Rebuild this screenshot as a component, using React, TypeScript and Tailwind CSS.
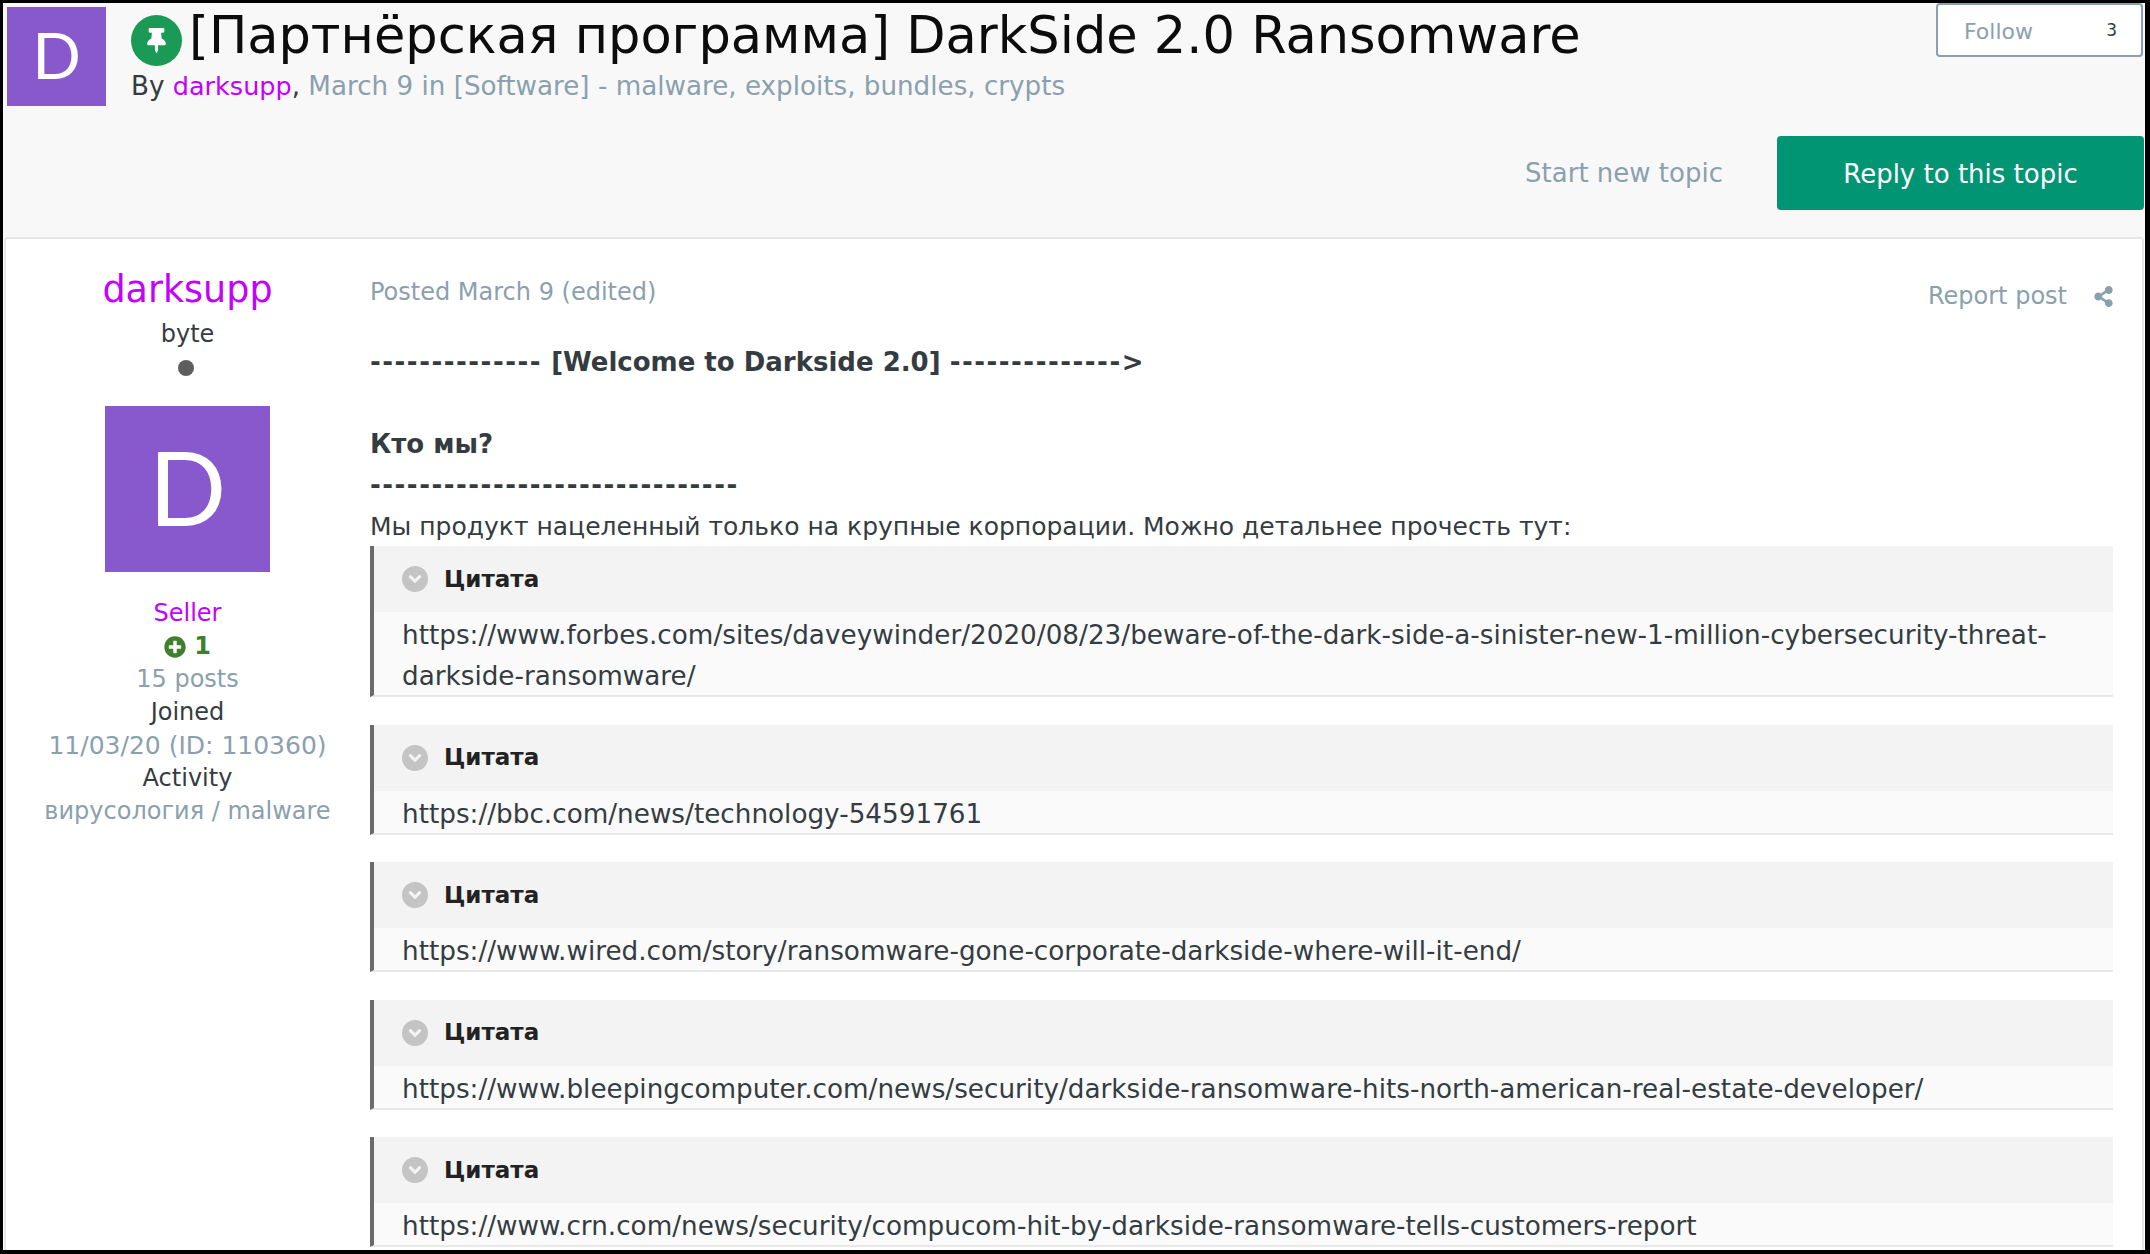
import { FaThumbtack, FaShareAlt, FaPlusCircle, FaAngleDown } from "react-icons/fa";

const quotes = [
  "https://www.forbes.com/sites/daveywinder/2020/08/23/beware-of-the-dark-side-a-sinister-new-1-million-cybersecurity-threat-darkside-ransomware/",
  "https://bbc.com/news/technology-54591761",
  "https://www.wired.com/story/ransomware-gone-corporate-darkside-where-will-it-end/",
  "https://www.bleepingcomputer.com/news/security/darkside-ransomware-hits-north-american-real-estate-developer/",
  "https://www.crn.com/news/security/compucom-hit-by-darkside-ransomware-tells-customers-report",
];

function Quote({ text }: { text: string }) {
  return (
    <div className="mb-[27.5px] border-l-[4px] border-b-2 border-l-[#6a6a6a] border-b-[#e8e8e8] bg-[#fafafa]">
      <div className="flex h-[66px] items-center bg-[#f3f3f3] pl-[28px]">
        <span className="flex h-[26px] w-[26px] items-center justify-center rounded-full bg-[#c4c4c4] text-[20px] text-[#f3f3f3]">
          <FaAngleDown />
        </span>
        <span className="ml-[16px] text-[23px] font-bold text-[#222222]">Цитата</span>
      </div>
      <div className="-mb-[2px] pl-[28px] pr-[29px] pt-[3px] text-[26.25px] leading-[41px] text-[#353c41]">{text}</div>
    </div>
  );
}

export default function App() {
  return (
    <div className="h-[1254px] w-[2150px] overflow-hidden border-[3px] border-r-[5px] border-b-[4px] border-black bg-white font-['DejaVu_Sans',sans-serif] text-[24px] text-[#353c41]">
      <div className="flex h-[234px] flex-col bg-[#f8f8f8]">
        <div className="flex h-[133px]">
          <div className="ml-[4px] mt-[4px] flex h-[99px] w-[99px] items-center justify-center bg-[#8859cd] pb-[4px] font-['Lato',sans-serif] text-[64px] text-white">D</div>
          <div className="ml-[25px] flex-1">
            <div className="flex h-[65px] items-center">
              <span className="mt-[9px] flex h-[51px] w-[51px] shrink-0 items-center justify-center rounded-full bg-[#1b9a55] text-[25px] text-white">
                <FaThumbtack />
              </span>
              <span className="ml-[7px] whitespace-nowrap pt-[1px] text-[51px] leading-[64px] text-[#0c0c0c]">[Партнёрская программа] DarkSide 2.0 Ransomware</span>
            </div>
            <div className="text-[26.2px] leading-[36px] text-[#8ba0ae]">
              <span className="text-[#353c41]">By </span>
              <span className="text-[25.5px] text-[#c400ff]">darksupp</span>
              <span className="text-[#353c41]">, </span>
              March 9 in [Software] - malware, exploits, bundles, crypts
            </div>
          </div>
          <div className="mr-[2px] flex h-[54px] w-[207px] items-center justify-between rounded-[4px] border-2 border-[#8ba0ae] bg-white pl-[26px] pr-[24px] pt-[2px]">
            <span className="text-[22px] text-[#8ba0ae]">Follow</span>
            <span className="text-[17px] text-[#353c41]">3</span>
          </div>
        </div>
        <div className="flex items-center justify-end pr-[1px]">
          <span className="mr-[54px] text-[26px] text-[#8ba0ae]">Start new topic</span>
          <span className="flex h-[74px] w-[367px] items-center justify-center rounded-[4px] bg-[#029574] pt-[2px] text-[26px] text-white">Reply to this topic</span>
        </div>
      </div>
      <div className="mx-[1px] flex h-[1013px] rounded-t-[3px] border-x-2 border-t-2 border-[#e6e6e6]">
        <div className="flex w-[364px] shrink-0 flex-col items-center pr-[1px] pt-[28px] text-center leading-[33px]">
          <div className="text-[36.5px] leading-[46px] text-[#c400ff]">darksupp</div>
          <div className="mt-[5px]">byte</div>
          <div className="mr-[3px] mt-[9px] h-[16px] w-[16px] rounded-full bg-[#5e5e5e]" />
          <div className="mt-[30px] flex h-[166px] w-[165px] items-center justify-center bg-[#8859cd] pb-[6px] font-['Lato',sans-serif] text-[102px] text-white">D</div>
          <div className="mt-[25px] text-[#c400ff]">Seller</div>
          <div className="flex items-center gap-[8px] font-bold text-[#3f7f2e]">
            <FaPlusCircle className="text-[22px]" />1
          </div>
          <div className="text-[#8ba0ae]">15 posts</div>
          <div>Joined</div>
          <div className="text-[25px] text-[#8ba0ae]">11/03/20 (ID: 110360)</div>
          <div>Activity</div>
          <div className="text-[#8ba0ae]">вирусология / malware</div>
        </div>
        <div className="w-[1743px] shrink-0">
          <div className="flex h-[103px] items-start justify-between pt-[35px] text-[#8ba0ae]">
            <span>Posted March 9 (edited)</span>
            <span className="flex items-center gap-[26px] pt-[4px]">
              Report post
              <FaShareAlt className="-mr-[1px] text-[21px]" />
            </span>
          </div>
          <div className="text-[26px] font-bold leading-[41px]">
            <span className="tracking-[1.5px]">--------------</span> [Welcome to Darkside 2.0] <span className="tracking-[1.5px]">--------------&gt;</span>
          </div>
          <div className="h-[41px]" />
          <div className="text-[26px] font-bold leading-[41px]">Кто мы?</div>
          <div className="text-[26px] font-bold leading-[41px] tracking-[1.5px]">------------------------------</div>
          <div className="h-[40px] text-[25px] leading-[41px]">Мы продукт нацеленный только на крупные корпорации. Можно детальнее прочесть тут:</div>
          {quotes.map((q) => (
            <Quote key={q} text={q} />
          ))}
        </div>
      </div>
    </div>
  );
}
